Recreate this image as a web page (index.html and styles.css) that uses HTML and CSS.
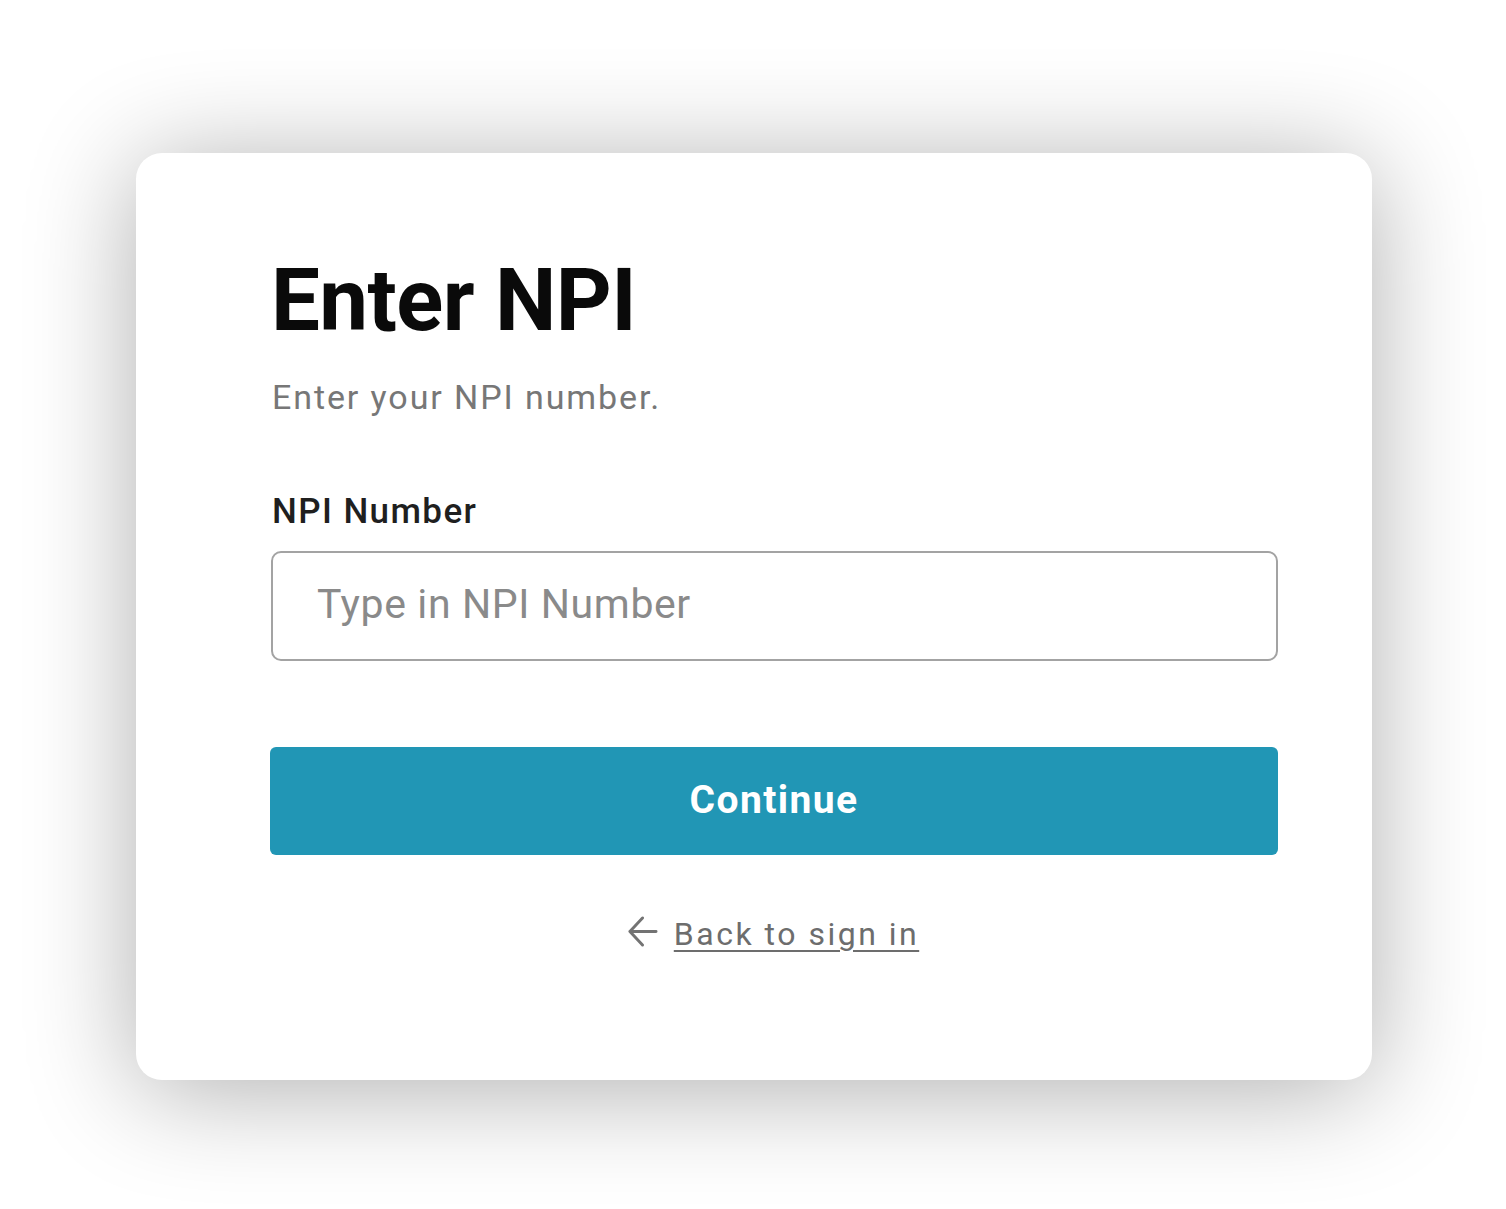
FILE: index.html
```html
<!DOCTYPE html>
<html lang="en">
<head>
<meta charset="utf-8">
<title>Enter NPI</title>
<link rel="stylesheet" href="styles.css">
</head>
<body>
  <main class="card">
    <h1 class="title">Enter NPI</h1>
    <p class="subtitle">Enter your NPI number.</p>
    <label class="label" for="npi">NPI Number</label>
    <input class="input" id="npi" type="text" placeholder="Type in NPI Number">
    <button class="btn" type="button">Continue</button>
    <div class="back">
      <svg class="back-icon" viewBox="0 0 32 32" width="32" height="32" aria-hidden="true">
        <path d="M30 16H3M16 2L3 16l13 14" fill="none" stroke="#737373" stroke-width="3" stroke-linecap="round" stroke-linejoin="round"/>
      </svg>
      <a class="back-link" href="#">Back to sign in</a>
    </div>
  </main>
</body>
</html>
```

FILE: styles.css
```css
html, body {
  margin: 0;
  padding: 0;
  background: #ffffff;
}

body {
  padding: 153px 134px 0 136px;
  font-family: Roboto, "Liberation Sans", Arial, sans-serif;
  min-height: 1209px;
  box-sizing: border-box;
}

.card {
  width: 1236px;
  height: 927px;
  box-sizing: border-box;
  background: #ffffff;
  border-radius: 26px;
  box-shadow: 0 10px 110px rgba(0, 0, 0, 0.32);
  padding: 104px 94px 0 134px;
  display: flex;
  flex-direction: column;
}

.title {
  margin: 0 0 0 1px;
  font-size: 87px;
  line-height: 87px;
  font-weight: 700;
  color: #0a0a0a;
  letter-spacing: -0.6px;
}

.subtitle {
  margin: 35px 0 0 2px;
  font-size: 34px;
  line-height: 36px;
  color: #777777;
  letter-spacing: 1.9px;
}

.label {
  margin: 79px 0 0 2px;
  font-size: 35px;
  line-height: 36px;
  font-weight: 500;
  color: #1f1f1f;
  letter-spacing: 1.4px;
}

.input {
  margin: 21px 0 0 1px;
  height: 110px;
  box-sizing: border-box;
  border: 2px solid #a3a3a3;
  border-radius: 10px;
  padding: 0 0 4px 44px;
  font-family: inherit;
  font-size: 41px;
  letter-spacing: 0.6px;
  color: #333;
  background: #fff;
  outline: none;
}

.input::placeholder {
  color: #8a8a8a;
}

.btn {
  margin: 86px 0 0 0;
  height: 108px;
  border: none;
  border-radius: 6px;
  background: #2196b5;
  color: #ffffff;
  font-family: inherit;
  font-size: 39px;
  font-weight: 700;
  letter-spacing: 1.4px;
  padding: 0 0 2px 0;
}

.back {
  margin: 61px 0 0 0;
  display: flex;
  justify-content: center;
  align-items: center;
  gap: 16px;
  padding-right: 2px;
}

.back-icon {
  width: 31px;
  height: 31px;
  flex: none;
  margin-top: -5px;
}

.back-link {
  font-size: 32px;
  line-height: 36px;
  color: #6d6d6d;
  letter-spacing: 2.5px;
  text-decoration: underline;
  text-decoration-thickness: 2px;
  text-underline-offset: 5px;
}
```
